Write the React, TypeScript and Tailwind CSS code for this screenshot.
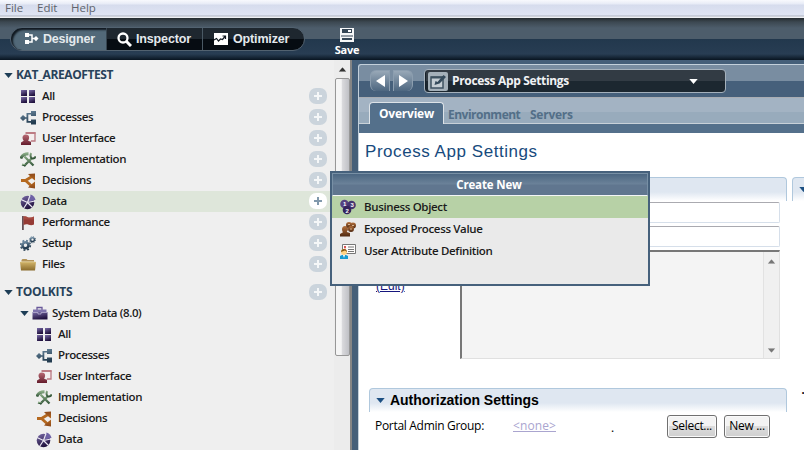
import React from "react";

type IconName =
  | "all" | "processes" | "ui" | "implementation" | "decisions"
  | "data" | "performance" | "setup" | "files" | "toolkit";

const gradients = (
  <svg className="absolute size-0">
    <defs>
      <linearGradient id="purple" x1="0" y1="0" x2="0.4" y2="1">
        <stop offset="0" stopColor="#7a6ca8" /><stop offset="1" stopColor="#21123f" />
      </linearGradient>
      <linearGradient id="steel" x1="0" y1="0" x2="0.3" y2="1">
        <stop offset="0" stopColor="#6f8ca3" /><stop offset="1" stopColor="#233c50" />
      </linearGradient>
      <linearGradient id="wine" x1="0" y1="0" x2="0" y2="1">
        <stop offset="0" stopColor="#b96a74" /><stop offset="1" stopColor="#641c2c" />
      </linearGradient>
      <linearGradient id="green" x1="0" y1="0" x2="0" y2="1">
        <stop offset="0" stopColor="#86a882" /><stop offset="1" stopColor="#34563a" />
      </linearGradient>
      <linearGradient id="orange" x1="0" y1="0" x2="0" y2="1">
        <stop offset="0" stopColor="#8c4a1c" /><stop offset="0.5" stopColor="#b8691f" /><stop offset="1" stopColor="#8c4a1c" />
      </linearGradient>
      <linearGradient id="gold" x1="0" y1="0" x2="0" y2="1">
        <stop offset="0" stopColor="#d2b469" /><stop offset="1" stopColor="#8a6b2c" />
      </linearGradient>
      <linearGradient id="brown" x1="0" y1="0" x2="0" y2="1">
        <stop offset="0" stopColor="#b5713c" /><stop offset="1" stopColor="#4e2811" />
      </linearGradient>
    </defs>
  </svg>
);

function Icon({ name }: { name: IconName }) {
  return (
    <svg viewBox="0 0 16 16" className="size-4 shrink-0">
      {name === "all" && (
        <g fill="url(#purple)">
          <rect x="1" y="1" width="6" height="6" /><rect x="9" y="1" width="6" height="6" />
          <rect x="1" y="8" width="6" height="6" /><rect x="9" y="8" width="6" height="6" />
        </g>
      )}
      {name === "processes" && (
        <g fill="url(#steel)">
          <path d="M0 8l3-3 2.500 2.200H6.500V3H11V1h5v5h-5V4.500H8.300V11H11V9.500h5v5h-5V12.700H6.500V8.800h-1L3 11z" />
        </g>
      )}
      {name === "ui" && (
        <g>
          <path d="M6 2h9v8h-4" fill="#f4eeee" stroke="#b97880" strokeWidth="1.300" />
          <path d="M5.500 1h10v2h-10z" fill="#bd7c84" />
          <path d="M5.800 3.500C8 3.500 9.100 4.800 9.100 6.500S8.400 9 8.100 9.800l2.900 1V14H1v-2.500l2.800-1.700C3.300 9 2.500 8 2.500 6.500s1.100-3 3.300-3z" fill="url(#wine)" />
        </g>
      )}
      {name === "implementation" && (
        <g fill="none" stroke="url(#green)">
          <path d="M4.500 4.500l9 9M11.500 6.500L4 14" strokeWidth="2.300" />
          <path d="M.8 6.500C2 3.500 4.500 1.800 8.500 1.800" strokeWidth="3" />
          <path d="M11.300 1.200c-1.500 2-.5 5 1 5.200 1.500.2 3-.7 3.300-2.200" strokeWidth="2" />
          <path d="M2 12.500l3.500 1" strokeWidth="2" />
        </g>
      )}
      {name === "decisions" && (
        <g>
          <path d="M1 7.500h5M5.500 7.500L12 3.500M5.500 7.500L11 12.500" fill="none" stroke="#b5691f" strokeWidth="2.800" />
          <path d="M8 1l7-.5V7.500l-2-1.500zM15 15.500l-7-1 2-2 5-4z" fill="url(#orange)" />
        </g>
      )}
      {name === "data" && (
        <g>
          <circle cx="7.500" cy="8.500" r="6.800" fill="url(#purple)" />
          <path d="M8.500 7.500L10.500.5A7.500 7.500 0 0 1 15.500 6z" fill="#6e62a5" />
          <path d="M1 5.500l6.500 3L10 1.500M7.500 8.500L15 7M7.500 8.500L3.500 14.500M7.500 8.500l5 5" stroke="#ece9f4" strokeWidth="1.200" fill="none" />
        </g>
      )}
      {name === "performance" && (
        <g>
          <path d="M2 1h1.800v14H2z" fill="#665056" />
          <path d="M3.500 1.500c3-1.200 4 1.300 6.500 1 1.500-.1 2.500-.5 4-1v8c-2 .8-3.300.9-5.300.2-2-.8-3.200-.5-5.200.2z" fill="#963b35" />
          <path d="M3.500 1.500c3-1.200 4 1.300 6.500 1 1.500-.1 2.500-.5 4-1v3H3.500z" fill="#b75a4d" opacity=".45" />
        </g>
      )}
      {name === "setup" && (
        <g fill="none" stroke="url(#steel)">
          <circle cx="5.500" cy="9.300" r="3" strokeWidth="2.600" />
          <circle cx="5.500" cy="9.300" r="4.800" strokeWidth="1.700" strokeDasharray="1.900 1.870" />
          <circle cx="12.500" cy="3.700" r="1.900" strokeWidth="1.500" />
          <circle cx="12.500" cy="3.700" r="3.100" strokeWidth="1" strokeDasharray="1.200 1.230" />
        </g>
      )}
      {name === "files" && (
        <g>
          <path d="M1.500 12V3L2.500 2h4l1 1h6.500V6" fill="#b3945a" />
          <path d="M0 5h16l-1 8.500H1z" fill="url(#gold)" />
          <path d="M.5 4.800h15" stroke="#eadbab" strokeWidth=".8" />
        </g>
      )}
      {name === "toolkit" && (
        <g>
          <path d="M5 4V1.500h5V4" stroke="#69599a" strokeWidth="1.300" fill="none" />
          <path d="M1 3.500h13.500v4H1z" fill="#8074ad" />
          <path d="M.5 6h15v7.500H.5z" fill="url(#purple)" />
          <path d="M.5 6.500h5.500v1.500h3V6.500h6.500" stroke="#b9b1d2" strokeWidth=".8" fill="none" />
        </g>
      )}
    </svg>
  );
}

function Plus({ bright = false }: { bright?: boolean }) {
  return (
    <span className={`mb-px flex h-4 w-[18px] items-center justify-center rounded-[7px] ${bright ? "bg-white" : "bg-[#cbd4dc]"}`}>
      <svg viewBox="0 0 8 8" className="size-2">
        <path d="M4 0v8M0 4h8" stroke={bright ? "#8199ac" : "#f5f7f8"} strokeWidth="2" />
      </svg>
    </span>
  );
}

const Caret = ({ className = "text-[#1d3d56]" }: { className?: string }) => (
  <svg viewBox="0 0 10 6" className={`h-[5px] w-[9px] shrink-0 ${className}`}>
    <path d="M0 0h10L5 6z" fill="currentColor" />
  </svg>
);

const treeText = "whitespace-nowrap pb-px text-[11.5px] font-semibold tracking-[-0.4px] text-[#1b1b1b]";

function TreeRow({ icon, label, nested = false, selected = false }: { icon: IconName; label: string; nested?: boolean; selected?: boolean }) {
  return (
    <div className={`flex h-[21px] shrink-0 items-center pr-[7px] ${nested ? "pl-9" : "pl-5"} ${selected ? "bg-[#dee6da]" : ""}`}>
      <Icon name={icon} />
      <span className={`ml-1.5 grow ${treeText}`}>{label}</span>
      {!nested && <Plus bright={selected} />}
    </div>
  );
}

const items: [IconName, string][] = [
  ["all", "All"], ["processes", "Processes"], ["ui", "User Interface"],
  ["implementation", "Implementation"], ["decisions", "Decisions"], ["data", "Data"],
  ["performance", "Performance"], ["setup", "Setup"], ["files", "Files"],
];

function Sidebar() {
  return (
    <aside className="flex h-[390px] w-[334px] shrink-0 flex-col overflow-hidden bg-[#efefef] pt-[5px]">
      <div className="flex h-[21px] shrink-0 items-center gap-[3px] pl-1">
        <Caret />
        <span className="pb-px text-[12px] font-bold tracking-[-0.4px] text-[#28425a]">KAT_AREAOFTEST</span>
      </div>
      {items.map(([icon, label]) => <TreeRow key={label} icon={icon} label={label} selected={label === "Data"} />)}
      <div className="mt-[7px] flex h-[21px] shrink-0 items-center gap-[3px] pr-[7px] pl-1">
        <Caret />
        <span className="grow pb-px text-[12px] font-bold tracking-[-0.25px] text-[#28425a]">TOOLKITS</span>
        <Plus />
      </div>
      <div className="flex h-[21px] shrink-0 items-center pl-5">
        <Caret />
        <span className="ml-[3px] flex"><Icon name="toolkit" /></span>
        <span className={`ml-1 ${treeText}`}>System Data (8.0)</span>
      </div>
      {items.slice(0, 6).map(([icon, label]) => <TreeRow key={label} icon={icon} label={label} nested />)}
    </aside>
  );
}

function Header() {
  return (
    <header className="flex h-[42px] bg-[linear-gradient(#262c30_0px,#3c4851_4px,#4d5d6b_10px,#4d5d6b_21px,#22384d_21px,#283d53_36px,#091521_42px)] pl-2.5">
      <nav className="mt-[9px] flex h-[24px] w-[295px] shrink-0 overflow-hidden rounded-full border border-[#526270] bg-[linear-gradient(#1e272f_50%,#060c12_50%)] font-['Liberation_Sans',sans-serif] text-[12.5px] font-bold text-[#e4e9ed]">
        <div className="flex w-[95px] shrink-0 items-center rounded-l-full bg-[#526979] pl-[14px] shadow-[inset_2px_2px_2px_#101820]">
          <svg viewBox="0 0 14 12" className="mr-[4px] h-3 w-[14px] shrink-0 fill-white">
            <path d="M0 0h4v4H0zM0 7h4v4H0z" /><path d="M4 2h3v7H4M7 5.500h2.500" fill="none" stroke="white" strokeWidth="1.500" /><path d="M8.500 5.600L11 3l2.500 2.600L11 8.200z" />
          </svg>
          <span className="tracking-[-0.2px]">Designer</span>
        </div>
        <div className="flex w-[96px] shrink-0 items-center border-l border-[#36444f] pl-[10px]">
          <svg viewBox="0 0 15 15" className="mr-1 size-[15px] shrink-0"><circle cx="6" cy="6" r="4.500" fill="none" stroke="white" strokeWidth="2.300" /><path d="M9 9l5 5" stroke="white" strokeWidth="3" /></svg>
          <span className="tracking-[-0.15px]">Inspector</span>
        </div>
        <div className="flex grow items-center border-l border-[#4a5964] pl-[11px]">
          <svg viewBox="0 0 14 12" className="mr-[5px] h-3 w-[14px] shrink-0"><path d="M0 0h14v12H0z" fill="white" /><path d="M0 7l2.500-1.500L4.500 8l2-2 2 .5L11 3.500M8.500 3H11.500v3" fill="none" stroke="#101820" strokeWidth="1.200" /></svg>
          <span className="tracking-[-0.15px]">Optimizer</span>
        </div>
      </nav>
      <div className="ml-[30px] flex w-[24px] flex-col items-center pt-[10px]">
        <svg viewBox="0 0 14 14" className="size-[14px] shrink-0"><path d="M0 0h14v14H0z" fill="#f6f7f8" /><path d="M2 1h10v4H2zM1 7.500h12v1H1zM2 10h10v2H2z" fill="#354656" /><path d="M8 2h3v2H8z" fill="white" /></svg>
        <span className="text-[11px] leading-[15px] font-bold tracking-[-0.2px] text-white">Save</span>
      </div>
    </header>
  );
}

function ArrowButton({ right = false }: { right?: boolean }) {
  return (
    <button className={`flex h-[21px] w-[20px] items-center justify-center border border-b-0 border-[#8c9eaf] bg-gradient-to-b from-[#98a8b7] to-[#4e6780] ${right ? "rounded-r-md" : "rounded-l-md"}`}>
      <svg viewBox="0 0 9 12" className="h-3 w-[9px] fill-white"><path d={right ? "M0 0l9 6-9 6z" : "M9 0L0 6l9 6z"} /></svg>
    </button>
  );
}

function Toolbar() {
  return (
    <div className="flex h-[33px] shrink-0 items-center border-b border-[#a9adb3] bg-[linear-gradient(#798da1_16px,#46607b_16px)] pl-[11px]">
      <div className="flex gap-[3px] pb-px"><ArrowButton /><ArrowButton right /></div>
      <div className="ml-[11px] flex h-6 w-[302px] items-center rounded-[4px] border border-[#a5b1bc] bg-[linear-gradient(#323b44_50%,#1c2730_50%)] pr-[27px] pl-[3px] shadow-[inset_1px_0_#15202a]">
        <svg viewBox="0 0 20 19" className="h-[19px] w-5">
          <rect width="20" height="19" rx="2" fill="#a4b0b9" />
          <path d="M3 5h12v11H3z" fill="#c5ced4" stroke="#3e5261" strokeWidth="1.500" /><path d="M3 4.500h12v2H3z" fill="#3e5261" />
          <path d="M6.500 13l1-4 2 1 6-7 2.500 2-6.500 6.500z" fill="#354b5c" />
        </svg>
        <span className="ml-1 grow text-[12px] font-bold tracking-[-0.34px] text-[#f0f2f4]">Process App Settings</span>
        <Caret className="text-white" />
      </div>
    </div>
  );
}

function SectionHeader({ children }: { children?: React.ReactNode }) {
  return <div className="flex h-6 items-center rounded-t-[4px] border border-b-0 border-[#b0c8dd] bg-[linear-gradient(#dfe7f1_14px,#ffffff_100%)] pl-[6px]">{children}</div>;
}

const WinButton = ({ children, className }: { children: React.ReactNode; className: string }) => (
  <button className={`h-[23px] shrink-0 rounded-[3px] border border-[#707070] bg-[linear-gradient(#f3f3f3_50%,#dcdcdc_50%,#cfcfcf)] text-[12px] tracking-[-0.3px] whitespace-nowrap text-black shadow-[inset_0_0_0_1px_#fafafa] ${className}`}>{children}</button>
);

function Workspace() {
  return (
    <main className="flex h-[390px] min-w-0 grow flex-col bg-[#455f79] pt-1">
      <div className="flex min-h-0 grow flex-col overflow-hidden rounded-tl-[3px] border-t border-l border-[#c3d0db] bg-white">
        <Toolbar />
        <div className="flex h-[26px] shrink-0 items-end border-b border-[#c8d1d8] bg-[linear-gradient(#a3b3c3_14px,#98abbc_14px)] pl-[10px] text-[12px] font-bold text-[#536f88]">
          <div className="mb-[-1px] flex h-[22px] w-[75px] shrink-0 items-center justify-center rounded-t-[4px] border border-b-0 border-[#dde3e8] bg-[#54708b] tracking-[-0.2px] text-white">Overview</div>
          <span className="ml-1 w-[72px] leading-[17px] tracking-[-0.5px]">Environment</span>
          <span className="ml-[10px] leading-[17px] tracking-[-0.25px]">Servers</span>
        </div>
        <div className="h-[9px] shrink-0 bg-[#54708b]" />
        <h1 className="h-11 shrink-0 pt-1.5 pl-1.5 font-['Liberation_Sans',sans-serif] text-[17px] leading-[25px] tracking-[0.55px] text-[#174a7d]">Process App Settings</h1>
        <div className="flex h-[211px] shrink-0 gap-[5px] pl-[10px]">
          <section className="w-[418px] shrink-0">
            <SectionHeader />
            <div className="flex">
              <div className="w-[91px] pt-[77px] pl-[7px] font-['Liberation_Sans',sans-serif] text-[12px] leading-[17px] text-[#16167d]"><u>(Edit)</u></div>
              <div className="mt-px w-[320px]">
                <div className="h-[21px] rounded-[2px] border border-[#d6dfea] border-t-[#aaaab0]" />
                <div className="mt-[3px] h-[21px] rounded-[2px] border border-[#d6dfea] border-t-[#aaaab0]" />
                <div className="mt-[3px] flex h-[109px] justify-end border-t-2 border-r border-b border-l-2 border-[#e0e0e0] border-t-[#777] border-l-[#777] bg-[#f4f4f4]">
                  <div className="flex w-4 flex-col items-center justify-between border-l border-[#e2e2e2] bg-[#f0f0f0] pt-[7px] pb-[5px]">
                    <Caret className="scale-90 rotate-180 text-[#777]" /><Caret className="scale-90 text-[#777]" />
                  </div>
                </div>
              </div>
            </div>
          </section>
          <section className="w-[40px] shrink-0"><SectionHeader><Caret className="text-[#1c4f82]" /></SectionHeader></section>
        </div>
        <div className="flex shrink-0 pl-[10px]">
          <section className="w-[418px] shrink-0">
            <SectionHeader>
              <Caret className="text-[#1c4f82]" />
              <span className="ml-[5px] font-['Liberation_Sans',sans-serif] text-[14px] font-bold tracking-[-0.02px] text-black">Authorization Settings</span>
            </SectionHeader>
            <div className="flex h-7 items-center pl-[6px] text-[12px] text-black">
              <span className="w-[138px] shrink-0 whitespace-nowrap tracking-[-0.3px]">Portal Admin Group:</span>
              <span className="w-[98px] shrink-0 tracking-[0.1px] text-[#aaa5cf] underline">&lt;none&gt;</span>
              <span className="w-[56px] shrink-0 pt-1">.</span>
              <WinButton className="w-[50px]">Select...</WinButton>
              <WinButton className="ml-[7px] w-[46px]">New ...</WinButton>
            </div>
          </section>
          <span className="ml-[14px] h-4 leading-[1px] text-black">.</span>
        </div>
      </div>
    </main>
  );
}

function CreateMenu() {
  const rows = ["Business Object", "Exposed Process Value", "User Attribute Definition"];
  return (
    <div className="absolute top-[171px] left-[330px] h-[115px] w-[320px] border-2 border-[#46617c] bg-[#eaeaea]">
      <div className="flex h-[23px] items-center justify-center border border-[#7890a5] border-b-[#f3f5f6] bg-[linear-gradient(#4b6681,#6b8299_10px,#60768f_11px)] pr-[2px] pt-px text-[11.500px] font-bold tracking-[-0.15px] text-white">Create New</div>
      {rows.map((label, i) => (
        <div key={label} className={`flex h-[22px] items-center pl-2 ${i === 0 ? "bg-[#b7d1a6]" : ""}`}>
          <svg viewBox="0 0 16 16" className="size-4">
            {i === 0 && <g><circle cx="4.500" cy="5" r="4.300" fill="#554381" /><circle cx="11.500" cy="6" r="4.300" fill="#453470" /><circle cx="7" cy="11" r="4.300" fill="#34235c" /><g className="fill-white font-['Liberation_Sans',sans-serif] text-[6px] font-bold"><text x="3" y="6.500">1</text><text x="10.500" y="8">3</text><text x="5.500" y="13.500">2</text></g></g>}
            {i === 1 && <g fill="url(#brown)"><path d="M5 5c2 0 3 1.300 3 3S7 10 6.800 11L10 12v3.500H0V13l3-1.700C2.500 10.500 2 9.500 2 8s1-3 3-3z" /><circle cx="9" cy="4" r="3" /><circle cx="13" cy="4.500" r="3" /><circle cx="11" cy="8" r="3" /><path d="M8 3.500h2M12 4.500h2M10 8h2" stroke="#d8b491" /></g>}
            {i === 2 && <g><path d="M2.500 1.500h13v9h-13z" fill="#fffdfc" stroke="#777" /><path d="M8 4h6M8 6.500h6M8 8.500h6" stroke="#777" /><path d="M4 4h2M4 6.500h2" stroke="#c22" strokeWidth="1.500" /><circle cx="4" cy="9" r="3" fill="#ffd384" /><path d="M1 9c0-4 6-4 6 0L5 7.500z" fill="#815411" /><path d="M0 16v-3l2-1h4l2 1v3z" fill="#159ad2" /><path d="M3 12h2l-1 3z" fill="white" /></g>}
          </svg>
          <span className="ml-2 text-[11.5px] font-semibold tracking-[-0.35px] text-[#1b1b1b]">{label}</span>
        </div>
      ))}
    </div>
  );
}

export default function App() {
  return (
    <div className="relative h-[450px] w-[804px] overflow-hidden font-['Open_Sans',sans-serif]">
      {gradients}
      <div className="flex h-[18px] items-start border-b border-[#eef0f5] bg-[linear-gradient(#f8f9fd_0px,#e7ebf6_4px,#d6dced_5px,#dfe4f3_15px,#aeb4c1_16px,#f2f2f4_17px)] pl-[5px] text-[11.5px] leading-[16px] text-[#60646d]">
        <span className="w-8">File</span><span className="w-[34px]">Edit</span><span>Help</span>
      </div>
      <Header />
      <div className="flex">
        <Sidebar />
        <div className="flex h-[390px] w-4 shrink-0 flex-col items-center bg-[#ececec] pt-[7px]">
          <Caret className="scale-90 rotate-180 text-[#333]" />
          <div className="mt-[6px] h-[278px] w-[15px] rounded-[2px] border border-[#979797] bg-[linear-gradient(90deg,#f5f5f5_40%,#d9d9dc_50%,#bfc0c5)]" />
        </div>
        <div className="h-[390px] w-2 shrink-0 border-l-2 border-[#858585] bg-[#455f79]" />
        <Workspace />
      </div>
      <CreateMenu />
    </div>
  );
}
